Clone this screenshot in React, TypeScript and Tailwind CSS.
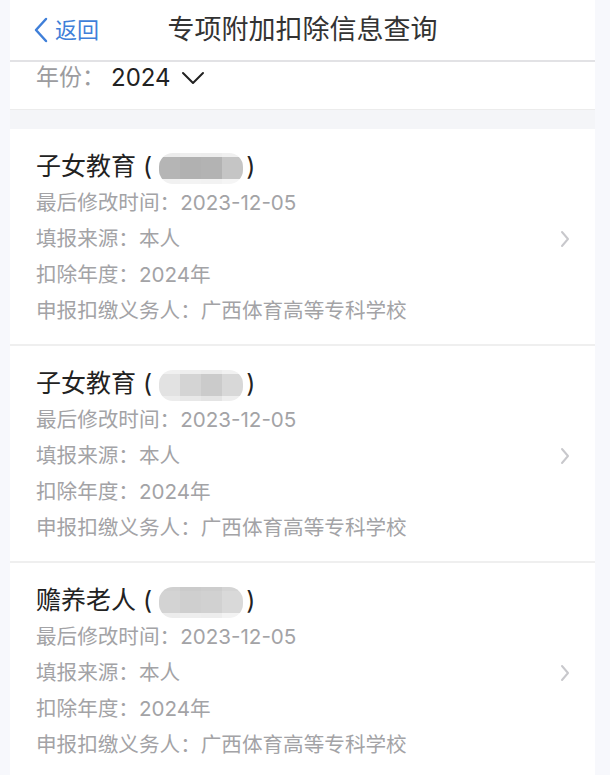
import React from 'react';

interface Deduction {
  kind: string;
  updated: string;
  source: string;
  year: string;
  agent: string;
  blur: string[][];
}

const records: Deduction[] = [
  {
    kind: '子女教育',
    updated: '2023-12-05',
    source: '本人',
    year: '2024年',
    agent: '广西体育高等专科学校',
    blur: [
      ['#ececec', '#eeeeee', '#ededed', '#f0f0f0'],
      ['#b5b5b5', '#b1b1b1', '#b3b3b3', '#c5c5c5'],
      ['#f1f1f1', '#f3f3f3', '#f2f2f2', '#f5f5f5'],
    ],
  },
  {
    kind: '子女教育',
    updated: '2023-12-05',
    source: '本人',
    year: '2024年',
    agent: '广西体育高等专科学校',
    blur: [
      ['#f0f0f0', '#eeeeee', '#ececec', '#f1f1f1'],
      ['#e2e2e2', '#d4d4d4', '#cbcbcb', '#d8d8d8'],
      ['#ececec', '#e8e8e8', '#e4e4e4', '#eeeeee'],
    ],
  },
  {
    kind: '赡养老人',
    updated: '2023-12-05',
    source: '本人',
    year: '2024年',
    agent: '广西体育高等专科学校',
    blur: [
      ['#d0d0d0', '#cbcbcb', '#cdcdcd', '#d4d4d4'],
      ['#d3d3d3', '#cfcfcf', '#d1d1d1', '#d9d9d9'],
      ['#ececec', '#eeeeee', '#ededed', '#f3f3f3'],
    ],
  },
];

const Blurred = ({ grid }: { grid: string[][] }) => (
  <span className="inline-flex flex-col w-[84px] h-[31px] rounded-[14px] overflow-hidden blur-[0.6px] align-middle">
    <span className="flex h-[4px]">
      {grid[0].map((c, j) => (
        <span key={j} className="flex-1" style={{ backgroundColor: c }} />
      ))}
    </span>
    <span className="flex flex-1">
      {grid[1].map((c, j) => (
        <span key={j} className="flex-1" style={{ backgroundColor: c }} />
      ))}
    </span>
    <span className="flex h-[5px]">
      {grid[2].map((c, j) => (
        <span key={j} className="flex-1" style={{ backgroundColor: c }} />
      ))}
    </span>
  </span>
);

const Card = ({ item }: { item: Deduction }) => (
  <div className="flex items-center bg-white border-b-2 border-[#efefef] pl-[26px] pr-[25px] pt-[20px] pb-[15px]">
    <div className="flex-1">
      <div className="flex items-center h-[36px] text-[25px] text-[#222]">
        <span>{item.kind}</span>
        <span className="ml-[7px]">(</span>
        <span className="ml-[7px] mr-[3px]">
          <Blurred grid={item.blur} />
        </span>
        <span>)</span>
      </div>
      <div className="text-[20.6px] leading-[36px] text-[#a3a3a6]">
        <div>最后修改时间：{item.updated}</div>
        <div>填报来源：{item.source}</div>
        <div>扣除年度：{item.year}</div>
        <div>申报扣缴义务人：{item.agent}</div>
      </div>
    </div>
    <svg width="10" height="18" viewBox="0 0 10 18" fill="none">
      <polyline points="2,2 8,9 2,16" stroke="#c8c8cc" strokeWidth="2" strokeLinecap="round" strokeLinejoin="round" />
    </svg>
  </div>
);

const App = () => {
  return (
    <div
      className="min-h-screen bg-[#f7f8fc] pl-[10px] pr-[15px]"
      style={{ fontFamily: 'Inter, "Noto Sans CJK SC", sans-serif' }}
    >
      <div className="bg-white min-h-screen">
        {/* Header */}
        <div className="grid grid-cols-[1fr_auto_1fr] items-center h-[62px] border-b-2 border-[#e2e2e5]">
          <div className="flex items-center pl-[23px] text-[#3f7fd9] text-[22px]">
            <svg width="16" height="26" viewBox="0 0 16 26" fill="none" className="mr-[6px]">
              <polyline points="13,2 3,13 13,24" stroke="#3f7fd9" strokeWidth="2.5" strokeLinecap="round" strokeLinejoin="round" />
            </svg>
            <span>返回</span>
          </div>
          <h1 className="text-[27px] text-[#333]">专项附加扣除信息查询</h1>
          <div />
        </div>

        {/* Year picker */}
        <div className="flex items-start h-[48px] pl-[26px] border-b border-[#ececec]">
          <div className="flex items-center h-[31px]">
            <span className="text-[23px] text-[#9c9c9f]">年份：</span>
            <span className="text-[24px] text-[#222] ml-[6px]">2024</span>
            <svg width="24" height="14" viewBox="0 0 24 14" fill="none" className="ml-[10px]">
              <polyline points="2,2 12,12 22,2" stroke="#222" strokeWidth="2" strokeLinecap="round" strokeLinejoin="round" />
            </svg>
          </div>
        </div>
        <div className="h-[19px] bg-[#f4f5f8]" />

        {/* Records */}
        {records.map((r, i) => (
          <Card key={i} item={r} />
        ))}
      </div>
    </div>
  );
};

export default App;
